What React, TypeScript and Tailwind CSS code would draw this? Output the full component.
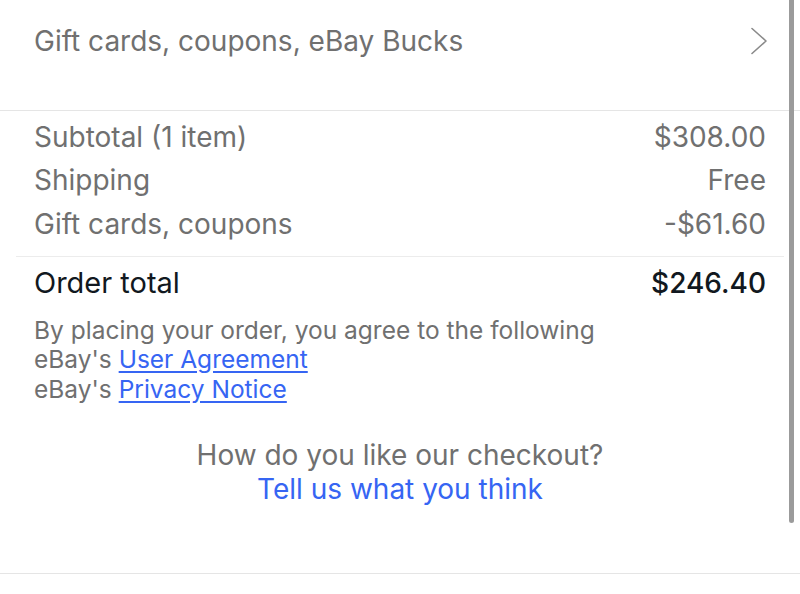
const rows = [
  { label: "Subtotal (1 item)", value: "$308.00" },
  { label: "Shipping", value: "Free" },
  { label: "Gift cards, coupons", value: "-$61.60" },
];

export default function App() {
  return (
    <div
      className="relative h-[594px] w-[800px] overflow-hidden bg-white"
      style={{ fontFamily: "Inter, 'Liberation Sans', sans-serif" }}
    >
      {/* Gift card entry */}
      <div className="flex h-[110px] items-start justify-between pl-[34px] pr-[32px] pt-[22px]">
        <span className="text-[28px] leading-[38px] text-[#707070]">
          Gift cards, coupons, eBay Bucks
        </span>
        <svg width="18" height="28" viewBox="0 0 18 28" className="mt-[5px]" fill="none">
          <path d="M2 1.5 L16 14 L2 26.5" stroke="#8a8a8a" strokeWidth="1.6" strokeLinecap="round" strokeLinejoin="round" />
        </svg>
      </div>

      {/* Summary */}
      <div className="border-t border-[#e5e5e5]">
        <div className="px-[34px] pt-[4px]">
          {rows.map((r) => (
            <div key={r.label} className="flex h-[43.5px] items-center justify-between text-[28px] text-[#707070]">
              <span>{r.label}</span>
              <span>{r.value}</span>
            </div>
          ))}
        </div>
        <div className="mx-[16px] mt-[10px] border-t border-[#ececec]" />
        <div className="flex h-[53px] items-center justify-between px-[34px] text-[28px] text-[#111820]">
          <span className="text-[29px]">Order total</span>
          <span className="font-medium">$246.40</span>
        </div>

        {/* Legal */}
        <div className="px-[34px] pt-[6px] text-[24.5px] leading-[29.5px] text-[#707070]">
          <p>By placing your order, you agree to the following</p>
          <p>
            eBay's <a className="text-[#3665f3] underline underline-offset-3">User Agreement</a>
          </p>
          <p>
            eBay's <a className="text-[#3665f3] underline underline-offset-3">Privacy Notice</a>
          </p>
        </div>

        {/* Feedback */}
        <div className="flex h-[169px] flex-col items-center pt-[34px] text-[28px] leading-[34px]">
          <span className="text-[#707070]">How do you like our checkout?</span>
          <a className="text-[#3665f3]">Tell us what you think</a>
        </div>
      </div>

      <div className="border-t border-[#e5e5e5]" />

      {/* Overlay scrollbar */}
      <div className="absolute right-[6px] top-0 h-[523px] w-[5px] rounded-b-full bg-[#9b9b9b]" />
    </div>
  );
}
